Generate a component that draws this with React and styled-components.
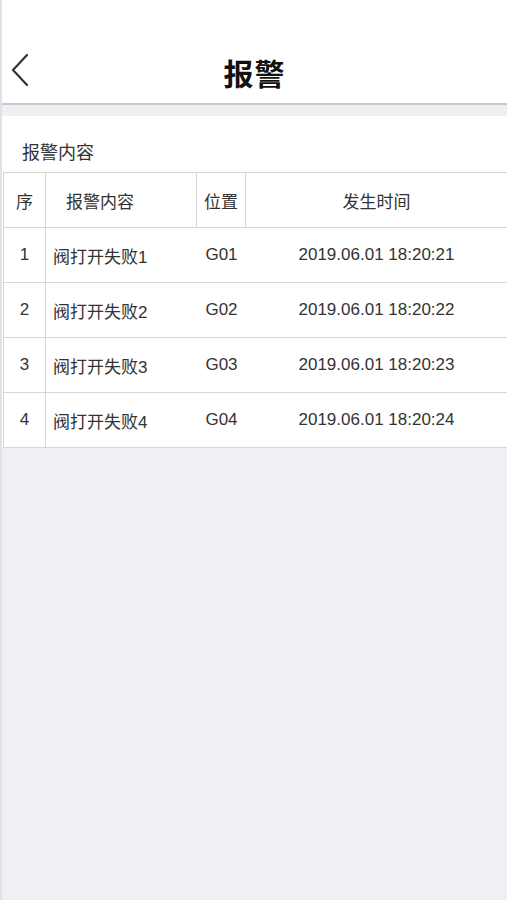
import React from 'react';
import styled, { createGlobalStyle } from 'styled-components';

const GlobalStyle = createGlobalStyle`
  html, body {
    margin: 0;
    padding: 0;
    background: #efeff4;
  }
  body {
    font-family: "Liberation Sans", "Noto Sans CJK SC", sans-serif;
    color: #333;
  }
`;

const Page = styled.div`
  min-height: 900px;
  background: #efeff4;
  border-left: 2px solid #e2e2e6;
  box-sizing: border-box;
`;

const NavBar = styled.header`
  height: 105px;
  box-sizing: border-box;
  padding-top: 40px;
  background: #fff;
  border-bottom: 2px solid #c8c8cc;
  position: relative;
  display: flex;
  align-items: center;
  justify-content: center;
`;

const BackButton = styled.button`
  position: absolute;
  left: 4px;
  top: 50px;
  width: 28px;
  height: 40px;
  padding: 0;
  border: none;
  background: transparent;
  display: flex;
  align-items: center;
  justify-content: center;
`;

const Title = styled.h1`
  margin: 0;
  font-size: 30px;
  font-weight: 700;
  color: #111;
  letter-spacing: 1px;
  font-family: "Noto Sans CJK SC", sans-serif;
`;

const Section = styled.section`
  margin-top: 11px;
  background: #fff;
`;

const SectionLabel = styled.div`
  height: 56px;
  box-sizing: border-box;
  padding: 22px 0 0 20px;
  font-size: 18px;
  color: #333;
`;

const Table = styled.div`
  margin-left: 1px;
  border-left: 1px solid #d6d6d6;
  border-top: 1px solid #d6d6d6;
`;

const Row = styled.div`
  display: grid;
  grid-template-columns: 42px 151px 49px 1fr;
  height: 55px;
  border-bottom: 1px solid #d6d6d6;
  box-sizing: border-box;
`;

const Cell = styled.div`
  display: flex;
  align-items: center;
  justify-content: ${(p) => (p.$align === 'left' ? 'flex-start' : 'center')};
  padding-left: ${(p) => p.$pad || 0}px;
  font-size: 17px;
  color: #333;
  border-right: ${(p) => (p.$line ? '1px solid #d6d6d6' : 'none')};
  white-space: nowrap;
`;

const ChevronLeft = () => (
  <svg width="20" height="34" viewBox="0 0 20 34" fill="none">
    <path d="M17 2 L3 17 L17 32" stroke="#333" strokeWidth="2.2" strokeLinecap="round" strokeLinejoin="round" />
  </svg>
);

const alarms = [
  { id: 1, text: '阀打开失败1', pos: 'G01', time: '2019.06.01 18:20:21' },
  { id: 2, text: '阀打开失败2', pos: 'G02', time: '2019.06.01 18:20:22' },
  { id: 3, text: '阀打开失败3', pos: 'G03', time: '2019.06.01 18:20:23' },
  { id: 4, text: '阀打开失败4', pos: 'G04', time: '2019.06.01 18:20:24' },
];

export default function App() {
  return (
    <>
      <GlobalStyle />
      <Page>
        <NavBar>
          <BackButton aria-label="返回">
            <ChevronLeft />
          </BackButton>
          <Title>报警</Title>
        </NavBar>
        <Section>
          <SectionLabel>报警内容</SectionLabel>
          <Table>
            <Row>
              <Cell $line>序</Cell>
              <Cell $line $align="left" $pad={20}>报警内容</Cell>
              <Cell $line>位置</Cell>
              <Cell>发生时间</Cell>
            </Row>
            {alarms.map((a) => (
              <Row key={a.id}>
                <Cell $line>{a.id}</Cell>
                <Cell $align="left" $pad={7}>{a.text}</Cell>
                <Cell>{a.pos}</Cell>
                <Cell>{a.time}</Cell>
              </Row>
            ))}
          </Table>
        </Section>
      </Page>
    </>
  );
}
